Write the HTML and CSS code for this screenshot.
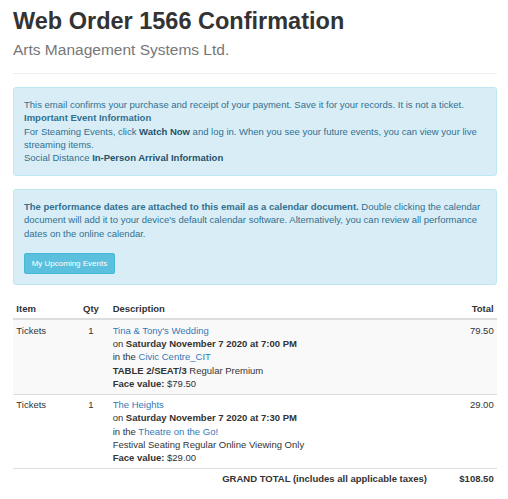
FILE: index.html
```html
<!DOCTYPE html>
<html lang="en">
<head>
  <meta charset="UTF-8">
  <meta name="viewport" content="width=device-width, initial-scale=1.0">
  <title>Web Order 1566 Confirmation</title>
  <link rel="stylesheet" href="styles.css">
</head>
<body>
  <div class="page">
    <div class="page-header">
      <h1>Web Order 1566 Confirmation</h1>
      <div class="subtitle">Arts Management Systems Ltd.</div>
    </div>
    <hr>

    <div class="alert">
      This email confirms your purchase and receipt of your payment. Save it for your records. It is not a ticket.<br>
      <strong>Important Event Information</strong><br>
      For Steaming Events, click <a href="#" class="alert-link">Watch Now</a> and log in. When you see your future events, you can view your live streaming items.<br>
      Social Distance <a href="#" class="alert-link">In-Person Arrival Information</a>
    </div>

    <div class="alert">
      <p><strong>The performance dates are attached to this email as a calendar document.</strong> Double clicking the calendar document will add it to your device's default calendar software. Alternatively, you can review all performance dates on the online calendar.</p>
      <a href="#" class="btn">My Upcoming Events</a>
    </div>

    <table class="order">
      <thead>
        <tr>
          <th class="col-item">Item</th>
          <th class="col-qty">Qty</th>
          <th>Description</th>
          <th class="col-total">Total</th>
        </tr>
      </thead>
      <tbody>
        <tr class="striped">
          <td>Tickets</td>
          <td class="col-qty">1</td>
          <td>
            <div><a href="#">Tina &amp; Tony's Wedding</a></div>
            <div>on <strong>Saturday November 7 2020 at 7:00 PM</strong></div>
            <div>in the <a href="#">Civic Centre_CIT</a></div>
            <div><strong>TABLE 2/SEAT/3</strong> Regular Premium</div>
            <div><strong>Face value:</strong> $79.50</div>
          </td>
          <td class="col-total">79.50</td>
        </tr>
        <tr>
          <td>Tickets</td>
          <td class="col-qty">1</td>
          <td>
            <div><a href="#">The Heights</a></div>
            <div>on <strong>Saturday November 7 2020 at 7:30 PM</strong></div>
            <div>in the <a href="#">Theatre on the Go!</a></div>
            <div>Festival Seating Regular Online Viewing Only</div>
            <div><strong>Face value:</strong> $29.00</div>
          </td>
          <td class="col-total">29.00</td>
        </tr>
      </tbody>
      <tfoot>
        <tr>
          <td colspan="3" class="grand-label">GRAND TOTAL (includes all applicable taxes)</td>
          <td class="col-total grand-value">$108.50</td>
        </tr>
      </tfoot>
    </table>
  </div>
</body>
</html>
```

FILE: styles.css
```css
body {
  margin: 0;
  font-family: "Liberation Sans", Arial, sans-serif;
  font-size: 9.5px;
  line-height: 13.33px;
  color: #333;
  background-color: #fff;
}
a {
  color: #337ab7;
  text-decoration: none;
}
.page {
  padding: 0 11px 0 13px;
}
.page-header h1 {
  margin: 7.5px 0 0;
  font-size: 23.5px;
  line-height: 26.5px;
  font-weight: bold;
  color: #333;
}
.page-header .subtitle {
  margin-top: 7px;
  font-size: 15.5px;
  line-height: 18px;
  color: #777;
}
hr {
  margin: 14px 0 13px;
  border: 0;
  border-top: 1px solid #eee;
  height: 0;
}
.alert {
  padding: 10px;
  margin-bottom: 13.33px;
  border: 1px solid #bce8f1;
  border-radius: 3px;
  background-color: #d9edf7;
  color: #31708f;
}
.alert p {
  margin: 0 0 13.33px;
}
.alert .alert-link {
  font-weight: bold;
  color: #245269;
}
.btn {
  display: inline-block;
  padding: 3.33px 6.67px;
  font-size: 8px;
  line-height: 12px;
  color: #fff;
  background-color: #5bc0de;
  border: 1px solid #46b8da;
  border-radius: 2px;
}
.order {
  width: 100%;
  border-collapse: collapse;
}
.order th,
.order td {
  padding: 3.33px;
  text-align: left;
  vertical-align: top;
}
.order th {
  font-weight: bold;
  border-bottom: 2px solid #ddd;
}
.order tbody td,
.order tfoot td {
  border-top: 1px solid #ddd;
}
.order .striped {
  background-color: #f9f9f9;
}
.order .col-item {
  width: 53px;
}
.order .col-qty {
  width: 30px;
  text-align: center;
}
.order .col-total {
  width: 60px;
  text-align: right;
}
.order .grand-label,
.order .grand-value {
  font-weight: bold;
  text-align: right;
}
```
